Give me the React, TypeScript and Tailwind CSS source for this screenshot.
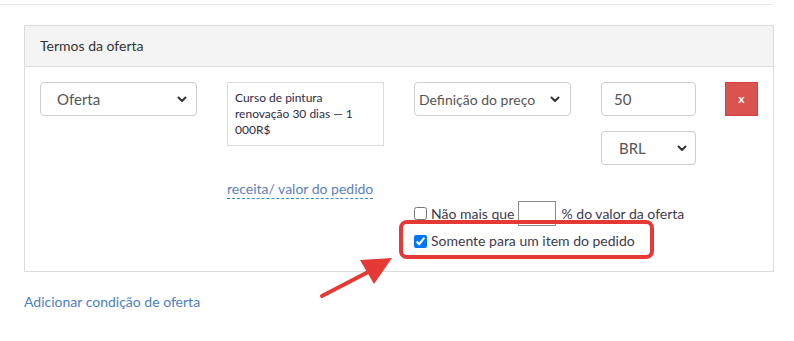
import React from "react";

function Chevron() {
  return (
    <svg width="10" height="7" viewBox="0 0 10 7" className="shrink-0">
      <path d="M1.5 1.5 L5 5 L8.5 1.5" fill="none" stroke="#333" strokeWidth="2" strokeLinecap="round" strokeLinejoin="round" />
    </svg>
  );
}

function FakeSelect({ label, w, h, pl, pr, ts }: { label: string; w: string; h: string; pl: string; pr: string; ts: string }) {
  return (
    <div className={`flex items-center justify-between rounded-[4px] border border-[#cfcfcf] bg-white text-[#555] ${ts} ${w} ${h} ${pl} ${pr}`}>
      <span>{label}</span>
      <Chevron />
    </div>
  );
}

export default function App() {
  return (
    <div className="relative h-[341px] w-[794px] overflow-hidden bg-white font-['Lato',sans-serif] text-[#3d3b4e]">
      <div className="mt-[4px] w-[773px] border-t border-[#e8e8e8]" />
      <div className="ml-[24px] mt-[20px] w-[750px] border border-[#dcdcdc]">
        <div className="flex h-[41px] items-center border-b border-[#dcdcdc] bg-[#f4f4f4] px-[15px] pb-[2px] text-[14px] text-[#333]">
          Termos da oferta
        </div>
        <div className="pb-[20px] pl-[15px] pt-[15px]">
          <div className="flex items-start">
            <FakeSelect label="Oferta" w="w-[157px]" h="h-[34px]" pl="pl-[16px]" pr="pr-[9px]" ts="text-[15px]" />
            <div className="ml-[30px] h-[64px] w-[157px] border border-[#dcdcdc] px-[7px] pt-[7px] text-[12px] leading-[16px] text-[#2f2a45]">
              Curso de pintura renovação 30 dias — 1 000R$
            </div>
            <div className="ml-[30px]">
              <FakeSelect label="Definição do preço" w="w-[157px]" h="h-[34px]" pl="pl-[4px]" pr="pr-[10px]" ts="text-[14px]" />
            </div>
            <div className="ml-[30px] flex w-[95px] flex-col gap-[15px]">
              <div className="flex h-[34px] items-center rounded-[4px] border border-[#cfcfcf] pl-[12px] text-[15px] text-[#555]">50</div>
              <FakeSelect label="BRL" w="w-[95px]" h="h-[34px]" pl="pl-[17px]" pr="pr-[8px]" ts="text-[15px]" />
            </div>
            <div className="ml-[29px] flex h-[34px] w-[33px] items-center justify-center border border-[#d43f3a] bg-[#d9534f] text-[12px] font-bold leading-none text-white">
              x
            </div>
          </div>
          <div className="ml-[187px] mt-[15px] inline-block border-b border-dashed border-[#3d8bd6] text-[14px] leading-[18px] text-[#5b7fbf]">
            receita/ valor do pedido
          </div>
          <div className="ml-[374px] mt-[1px] text-[14px]">
            <div className="flex h-[25px] items-center">
              <input type="checkbox" className="m-0 h-[13px] w-[13px]" readOnly />
              <span className="ml-[4px] -mt-[1px]">Não mais que</span>
              <div className="ml-[4px] h-[25px] w-[38px] border border-[#8a8a8a]" />
              <span className="ml-[5px] -mt-[1px]">% do valor da oferta</span>
            </div>
            <div className="mt-[5px] flex h-[20px] items-center">
              <input type="checkbox" defaultChecked className="m-0 h-[13px] w-[13px]" />
              <span className="ml-[4px] -mt-[2px]">Somente para um item do pedido</span>
            </div>
          </div>
        </div>
      </div>
      <div className="ml-[24px] mt-[21px] text-[14px] leading-[18px] text-[#4a7fc1]">Adicionar condição de oferta</div>

      <div className="absolute left-[399px] top-[220px] h-[39px] w-[255px] rounded-[8px] border-[4px] border-[#e53935]" />
      <svg className="absolute left-0 top-0" width="794" height="341">
        <line x1="322" y1="296" x2="372" y2="270" stroke="#e53935" strokeWidth="4" strokeLinecap="round" />
        <polygon points="392,258 360,260 374,284" fill="#e53935" />
      </svg>
    </div>
  );
}
